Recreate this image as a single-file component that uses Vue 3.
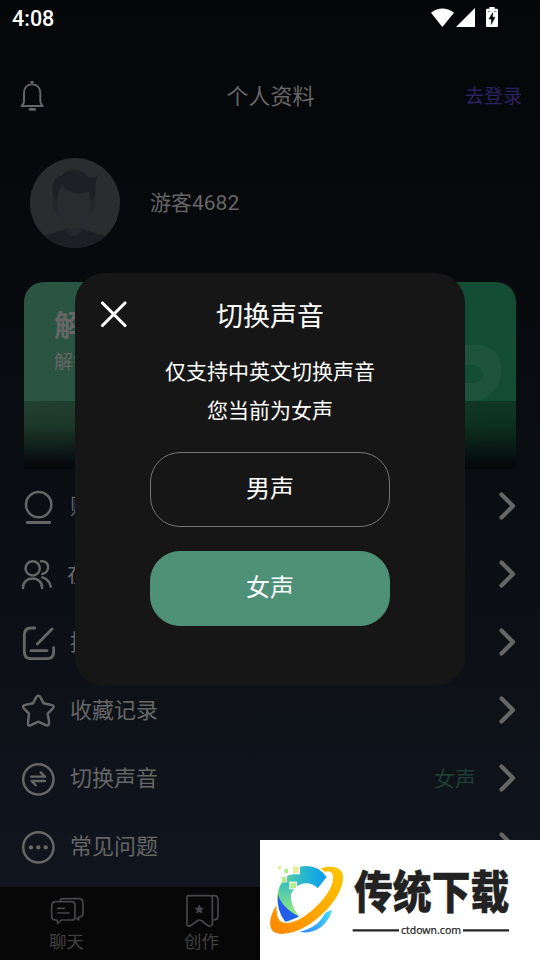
<script setup>
const rows = [
  { icon: 'account', box: '60 24 108 108', label: '账号' },
  { icon: 'service', box: '60 228 108 108', label: '在线', shift: true },
  { icon: 'edit', box: '60 432 108 108', label: '提交' },
  { icon: 'star', box: '60 36 108 108', label: '收藏记录' },
  { icon: 'switch', box: '60 240 108 108', label: '切换声音', value: '女声' },
  { icon: 'more', box: '60 444 108 108', label: '常见问题' },
]
</script>

<template>
  <div class="screen">
    <div class="status">
      <span class="time">4:08</span>
      <svg class="signals" width="72" height="24" viewBox="0 0 216 72">
        <path d="M3 17Q37-8 72 17L37 60Z" fill="#fff" />
        <path d="M135 3V60H78Z" fill="#fff" />
        <path d="M178 0h16v5h7q3 0 3 3v49q0 3-3 3h-30q-3 0-3-3V8q0-3 3-3h7Z" fill="#fff" />
        <path d="M188 17l-11 19h7v16l11-21h-7ZM174 13h7M192 13h7" fill="#050607" stroke="#050607" stroke-width="1.5" />
      </svg>
    </div>

    <header class="header">
      <svg class="bell" width="26" height="32" viewBox="58 240 78 96" fill="none" stroke="#666" stroke-width="6">
        <path d="M66 318c4-4 7-8 7-14v-25c0-16 10-26 24-26s25 10 25 26v25c0 6 3 10 7 14Z" stroke-linejoin="round" />
        <path d="M92 246h10" />
        <path d="M91 328h14" stroke-width="8" stroke-linecap="round" />
      </svg>
      <h1>个人资料</h1>
      <a class="login">去登录</a>
    </header>

    <section class="profile">
      <svg width="90" height="90" viewBox="90 53 270 270">
        <defs><clipPath id="face"><circle cx="225" cy="188" r="135" /></clipPath></defs>
        <g clip-path="url(#face)">
          <rect x="90" y="53" width="270" height="270" fill="#2b2c2d" />
          <path d="M120 291L198 265H244L330 291V330H120Z" fill="#1e1f25" />
          <path d="M198 252V270Q202 288 221 288T244 270V252Z" fill="#25262b" />
          <path d="M173 178C157 173 154 186 159 202Q163 218 174 219ZM270 178C286 173 289 186 284 202Q281 218 270 219Z" fill="#25262c" />
          <path d="M171 145L186 125H260L271 150V214C268 242 249 260 233 264Q221 267 209 264C191 258 176 237 173 214Z" fill="#2a2b2f" />
          <path d="M163 180C153 151 154 109 185 107C204 82 247 84 264 110Q281 114 291 107Q291 127 286 133C288 149 287 170 277 180L270 179V152C242 166 206 159 188 137Q171 149 173 177Z" fill="#1e2026" />
        </g>
      </svg>
      <span class="nickname">游客4682</span>
    </section>

    <section class="banner">
      <div class="banner-main">
        <strong>解锁</strong>
        <span>解锁全部</span>
        <svg class="banner-mark" width="80" height="56" viewBox="0 0 80 56">
          <path d="M0 0H54C71 0 79.500 10 79.500 24C79.500 42 66 57 46 57H0V38H46C54 38 61 36 61 29S56 20 48 20H0Z" fill="#1d533b" />
        </svg>
      </div>
      <div class="banner-foot"></div>
    </section>

    <nav class="menu">
      <div v-for="row in rows" :key="row.icon" class="row">
        <svg class="row-icon" width="36" height="36" :viewBox="row.box" fill="none" stroke="#666" stroke-width="7.500" stroke-linecap="round" stroke-linejoin="round">
          <template v-if="row.icon === 'account'">
            <circle cx="116" cy="74" r="38" />
            <path d="M82 127.500H149" stroke-width="8.500" />
          </template>
          <template v-else-if="row.icon === 'service'">
            <circle cx="98" cy="265" r="21.500" />
            <path d="M69 324V322C70 287 126 287 126 322V324M123 244C150 240 151 278 127 282M127 292Q149 299 152 320" />
          </template>
          <template v-else-if="row.icon === 'edit'">
            <path d="M104 444H94Q73 444 73 465V515Q73 536 94 536H140Q161 536 161 515V503M156 447L112 492M93 512H141" stroke-width="8.500" />
          </template>
          <path v-else-if="row.icon === 'star'" d="M108 53Q115 42 122 53L131 70L152 74Q166 76 158 86L143 101L147 123Q149 140 137 135L115 125L94 135Q82 140 84 127L87 101L72 86Q64 76 78 74L99 70Z" />
          <template v-else-if="row.icon === 'switch'">
            <circle cx="115" cy="298" r="45.500" />
            <path d="M94 290H135L122 277M135 303H95L107 316" stroke-width="7" />
          </template>
          <template v-else>
            <circle cx="115" cy="502" r="45.500" />
            <g fill="#666" stroke="none"><circle cx="93" cy="502" r="6.500" /><circle cx="115" cy="502" r="6.500" /><circle cx="137" cy="502" r="6.500" /></g>
          </template>
        </svg>
        <span class="label" :class="{ shift: row.shift }">{{ row.label }}</span>
        <span v-if="row.value" class="value">{{ row.value }}</span>
        <svg class="arrow" width="17" height="28" viewBox="0 0 17 28">
          <path d="M2.500 2.500L14 14L2.500 25.500" fill="none" stroke="#666" stroke-width="4.200" stroke-linecap="round" stroke-linejoin="round" />
        </svg>
      </div>
    </nav>

    <footer class="tabs">
      <div class="tab">
        <svg width="36" height="34" viewBox="147 72 108 102" fill="none" stroke="#46464b" stroke-width="5" stroke-linejoin="round" stroke-linecap="round">
          <path d="M168 95H215Q225 95 225 105V140Q225 150 215 150H184L173 160L171 150H168Q155 150 155 137V108Q155 95 168 95Z" />
          <path d="M181 91Q182 86 192 86H236Q249 86 249 99V128Q249 141 236 141V150L229 145M173 115H193M173 129H207" />
        </svg>
        <span>聊天</span>
      </div>
      <div class="tab">
        <svg width="36" height="34" viewBox="552 72 108 102" fill="none" stroke="#46464b" stroke-width="5" stroke-linejoin="round" stroke-linecap="round">
          <path d="M563 77H631Q637 77 637 84V165Q630 172 621 165L606 153Q598 148 591 153L575 165Q565 172 561 164V80Z" />
          <path d="M637 77H643Q654 77 654 90V136Q654 150 640 150" />
          <path d="M598 106L602 114L610 115L604 121L606 129L598 125L590 129L592 121L586 115L594 114Z" fill="#46464b" stroke-width="2" />
        </svg>
        <span>创作</span>
      </div>
    </footer>

    <div class="dialog">
      <div class="dialog-head">
        <svg class="close" width="28" height="28" viewBox="0 0 28 28">
          <path d="M2.500 2L25 24.500M25 2L2.500 24.500" stroke="#fff" stroke-width="3.100" stroke-linecap="round" />
        </svg>
        <h2>切换声音</h2>
      </div>
      <p>仅支持中英文切换声音<br />您当前为女声</p>
      <button class="choice">男声</button>
      <button class="choice active">女声</button>
    </div>

    <div class="watermark">
      <svg width="280" height="120" viewBox="15 15 840 360">
        <defs>
          <linearGradient id="ring" x1="0" y1="1" x2="1" y2="0"><stop offset="0" stop-color="#ff8600" /><stop offset="1" stop-color="#ffc800" /></linearGradient>
          <linearGradient id="blue" x1="0" y1="0" x2="1" y2="0"><stop offset="0" stop-color="#80dc83" /><stop offset=".4" stop-color="#35bfc0" /><stop offset="1" stop-color="#079cf5" /></linearGradient>
          <linearGradient id="left" x1="0" y1="0" x2="0" y2="1"><stop offset="0" stop-color="#39bfc0" /><stop offset="1" stop-color="#9aec75" /></linearGradient>
          <linearGradient id="tail" x1="0" y1="1" x2="1" y2="0"><stop offset="0" stop-color="#3387ff" /><stop offset="1" stop-color="#42e0ff" /></linearGradient>
        </defs>
        <path d="M133 96Q184 84 215 126L188 160C163 133 119 144 107 181Q103 211 132 244L98 260C59 221 58 160 91 128Z" fill="url(#blue)" />
        <path d="M77 150Q91 136 115 149C101 181 108 216 132 244L104 236Q63 194 77 150Z" fill="url(#left)" />
        <path d="M69 178Q80 218 132 245L91 260Q63 226 69 178Z" fill="#235ee8" />
        <path d="M134 290Q188 277 207 239Q213 229 231 226C219 269 181 301 134 290Z" fill="url(#tail)" />
        <path d="M197 100C236 88 267 98 264 131C261 173 225 222 176 259C130 293 84 304 59 292C37 280 44 240 65 211Q62 244 75 258C98 275 144 252 180 218C218 182 240 145 233 119C229 107 217 107 210 111Z" fill="url(#ring)" />
        <path d="M100 108H112V96H135V118H111V120H98V116ZM79 125H96V142H79ZM103 140H126V163H103Z" fill="#fff" />
        <path d="M68 93H78V103H68Z" fill="#e9efa0" />
        <path d="M88 101H99V114H88ZM80 126H93V141H80ZM106 143H123V160H106Z" fill="#b4ec86" />
        <path d="M114 95H131V114H114Z" fill="#e5ef96" />
        <text x="297" y="223" class="brand" textLength="466" lengthAdjust="spacingAndGlyphs" transform="translate(0 -28) scale(1 1.120)">传统下载</text>
        <path d="M293 286H432M624 286H762" stroke="#242424" stroke-width="7" />
        <text x="438" y="297" class="domain" textLength="180" lengthAdjust="spacingAndGlyphs">ctdown.com</text>
      </svg>
    </div>
  </div>
</template>

<style>
body { margin: 0; background: #050607; }
</style>

<style scoped>
* { box-sizing: border-box; }
.screen {
  position: relative;
  display: flex;
  flex-direction: column;
  width: 540px;
  height: 960px;
  overflow: hidden;
  color: #666;
  font-family: Roboto, "Noto Sans CJK SC", sans-serif;
  background: linear-gradient(#050607 0, #06080b 150px, #0a0d12 480px, #10141c 850px, #10141d 887px);
}
.screen > * { flex-shrink: 0; }
svg { display: block; flex: none; }
.status { display: flex; justify-content: space-between; height: 38px; padding: 6px 38px 0 12px; color: #fff; }
.time { font-size: 21.500px; font-weight: 500; line-height: 26px; }
.signals { margin-top: 1px; }
.header { display: grid; grid-template-columns: 1fr auto 1fr; align-items: center; height: 116px; padding: 0 18px 0 19px; }
h1 { margin: 0; padding-top: 2px; font-size: 22px; font-weight: 400; line-height: 32px; }
.login { justify-self: end; padding-top: 1px; font-size: 19px; color: #2d2260; line-height: 28px; }
.profile { display: flex; align-items: center; gap: 30px; height: 98px; padding: 0 30px; }
.nickname { font-size: 21px; line-height: 30px; }
.banner { width: 492px; height: 187px; margin: 30px 24px 0; overflow: hidden; border-radius: 20px 20px 0 0; }
.banner-main { position: relative; display: flex; flex-direction: column; height: 119px; padding: 23px 30px 0; background: linear-gradient(90deg, #2c5444, #134d33 85%); }
.banner strong { font-size: 30px; line-height: 42px; }
.banner span { font-size: 19px; line-height: 32px; }
.banner-mark { position: absolute; right: 14px; bottom: 0; }
.banner-foot { height: 68px; background: linear-gradient(#0000 0, #060a0d22 35%, #060a0d 92%), linear-gradient(90deg, #22402f, #0d3623); }
.menu { display: flex; flex-direction: column; margin-top: 3px; }
.row { display: flex; align-items: center; height: 68px; padding: 0 24px 0 20px; }
.label { margin-left: 14px; padding-top: 2px; font-size: 22px; line-height: 32px; }
.label.shift { margin-left: 11px; }
.arrow { margin-left: auto; }
.value { margin-left: auto; padding-top: 1px; color: #1e3e33; font-size: 21px; line-height: 30px; }
.value + .arrow { margin-left: 23px; }
.tabs { display: grid; grid-template-columns: repeat(4, 135px); height: 73px; margin-top: 7px; background: #070707; }
.tab { display: flex; flex-direction: column; align-items: center; gap: 1px; padding: 7px 2px 0 0; color: #404040; font-size: 17.500px; line-height: 26px; }
.dialog {
  position: absolute;
  left: 75px;
  top: 273px;
  width: 390px;
  height: 413px;
  padding: 21px 25px;
  border-radius: 30px;
  background: #161616;
  color: #fff;
  text-align: center;
}
.dialog-head { display: grid; grid-template-columns: 28px 1fr 28px; align-items: center; height: 42px; }
h2 { margin: 0; padding-top: 4px; font-size: 27px; font-weight: 400; line-height: 38px; }
.dialog p { margin: 17px 0 0; font-size: 21px; line-height: 39px; }
.choice { display: block; width: 240px; height: 75px; margin: 21px auto 0; padding: 0 0 6px; border: 1px solid #777; border-radius: 30px; background: transparent; color: #fff; font: 24px Roboto, "Noto Sans CJK SC", sans-serif; }
.choice.active { margin-top: 24px; border-color: #4e9178; background: #4e9178; }
.watermark { position: absolute; right: 0; bottom: 0; width: 280px; height: 120px; background: #fff; }
.brand { font: 900 122px "Noto Sans CJK SC", sans-serif; fill: #222; stroke: #222; stroke-width: 1; }
.domain { font: 32px "Noto Sans", sans-serif; fill: #222; stroke: #222; stroke-width: .6; }
</style>
